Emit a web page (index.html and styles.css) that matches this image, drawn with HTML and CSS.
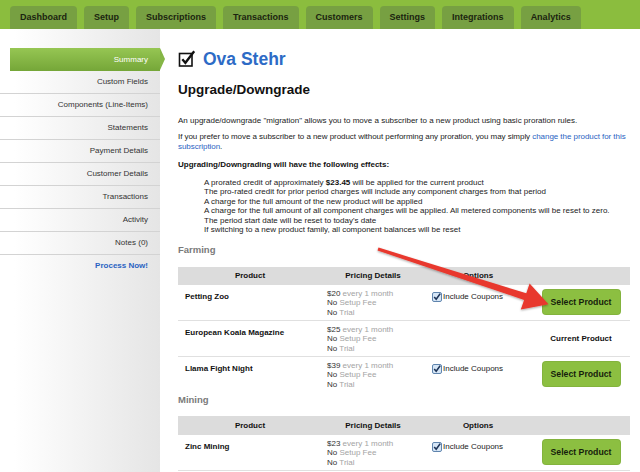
FILE: index.html
```html
<!DOCTYPE html>
<html lang="en">
<head>
<meta charset="utf-8">
<title>Upgrade/Downgrade</title>
<link rel="stylesheet" href="styles.css">
</head>
<body>
<nav class="topnav">
  <a class="tab">Dashboard</a>
  <a class="tab">Setup</a>
  <a class="tab">Subscriptions</a>
  <a class="tab">Transactions</a>
  <a class="tab">Customers</a>
  <a class="tab">Settings</a>
  <a class="tab">Integrations</a>
  <a class="tab">Analytics</a>
</nav>
<div class="main">
  <aside class="sidebar">
    <ul class="side-menu">
      <li class="active">Summary</li>
      <li>Custom Fields</li>
      <li>Components (Line-Items)</li>
      <li>Statements</li>
      <li>Payment Details</li>
      <li>Customer Details</li>
      <li>Transactions</li>
      <li>Activity</li>
      <li>Notes (0)</li>
      <li class="process">Process Now!</li>
    </ul>
  </aside>
  <section class="content">
    <h1 class="title">
      <svg class="title-icon" width="18" height="18" viewBox="0 0 18 18">
        <rect x="1.5" y="3.5" width="12.5" height="12.5" fill="none" stroke="#111" stroke-width="1.6"/>
        <path d="M4.3 9.2 L7.4 12.8 L16.2 1.2" fill="none" stroke="#111" stroke-width="2.3" stroke-linejoin="miter"/>
      </svg>
      <span>Ova Stehr</span>
    </h1>
    <h2 class="page-heading">Upgrade/Downgrade</h2>
    <p class="p1">An upgrade/downgrade "migration" allows you to move a subscriber to a new product using basic proration rules.</p>
    <p class="p2">If you prefer to move a subscriber to a new product without performing any proration, you may simply <a class="link">change the product for this subscription</a>.</p>
    <p class="effects-title">Upgrading/Downgrading will have the following effects:</p>
    <ul class="effects">
      <li>A prorated credit of approximately <b>$23.45</b> will be applied for the current product</li>
      <li>The pro-rated credit for prior period charges will include any component charges from that period</li>
      <li>A charge for the full amount of the new product will be applied</li>
      <li>A charge for the full amount of all component charges will be applied. All metered components will be reset to zero.</li>
      <li>The period start date will be reset to today's date</li>
      <li>If switching to a new product family, all component balances will be reset</li>
    </ul>

    <h3 class="family family-first">Farming</h3>
    <table class="products">
      <colgroup><col class="c1"><col class="c2"><col class="c3"><col class="c4"></colgroup>
      <thead>
        <tr><th>Product</th><th>Pricing Details</th><th>Options</th><th></th></tr>
      </thead>
      <tbody>
        <tr>
          <td class="name">Petting Zoo</td>
          <td class="pricing">
            <div><span class="val">$20</span> <span class="muted">every 1 month</span></div>
            <div><span class="val">No</span> <span class="muted">Setup Fee</span></div>
            <div><span class="val">No</span> <span class="muted">Trial</span></div>
          </td>
          <td class="options"><label class="coupon"><svg class="cb" width="10" height="10" viewBox="0 0 10 10"><rect x="0.5" y="0.5" width="9" height="9" rx="1.5" fill="#d6e6f6" stroke="#5f84ad"/><path d="M2.2 5 L4.2 7.3 L8.2 1.6" fill="none" stroke="#1d3357" stroke-width="1.6"/></svg>Include Coupons</label></td>
          <td class="action"><a class="btn">Select Product</a></td>
        </tr>
        <tr>
          <td class="name">European Koala Magazine</td>
          <td class="pricing">
            <div><span class="val">$25</span> <span class="muted">every 1 month</span></div>
            <div><span class="val">No</span> <span class="muted">Setup Fee</span></div>
            <div><span class="val">No</span> <span class="muted">Trial</span></div>
          </td>
          <td class="options"></td>
          <td class="action"><span class="current">Current Product</span></td>
        </tr>
        <tr class="last">
          <td class="name">Llama Fight Night</td>
          <td class="pricing">
            <div><span class="val">$39</span> <span class="muted">every 1 month</span></div>
            <div><span class="val">No</span> <span class="muted">Setup Fee</span></div>
            <div><span class="val">No</span> <span class="muted">Trial</span></div>
          </td>
          <td class="options"><label class="coupon"><svg class="cb" width="10" height="10" viewBox="0 0 10 10"><rect x="0.5" y="0.5" width="9" height="9" rx="1.5" fill="#d6e6f6" stroke="#5f84ad"/><path d="M2.2 5 L4.2 7.3 L8.2 1.6" fill="none" stroke="#1d3357" stroke-width="1.6"/></svg>Include Coupons</label></td>
          <td class="action"><a class="btn">Select Product</a></td>
        </tr>
      </tbody>
    </table>

    <h3 class="family family-next">Mining</h3>
    <table class="products products-next">
      <colgroup><col class="c1"><col class="c2"><col class="c3"><col class="c4"></colgroup>
      <thead>
        <tr><th>Product</th><th>Pricing Details</th><th>Options</th><th></th></tr>
      </thead>
      <tbody>
        <tr>
          <td class="name">Zinc Mining</td>
          <td class="pricing">
            <div><span class="val">$23</span> <span class="muted">every 1 month</span></div>
            <div><span class="val">No</span> <span class="muted">Setup Fee</span></div>
            <div><span class="val">No</span> <span class="muted">Trial</span></div>
          </td>
          <td class="options"><label class="coupon"><svg class="cb" width="10" height="10" viewBox="0 0 10 10"><rect x="0.5" y="0.5" width="9" height="9" rx="1.5" fill="#d6e6f6" stroke="#5f84ad"/><path d="M2.2 5 L4.2 7.3 L8.2 1.6" fill="none" stroke="#1d3357" stroke-width="1.6"/></svg>Include Coupons</label></td>
          <td class="action"><a class="btn">Select Product</a></td>
        </tr>
      </tbody>
    </table>
  </section>
</div>

<svg class="arrow" width="640" height="472" viewBox="0 0 640 472">
  <defs>
    <filter id="sh" x="-10%" y="-10%" width="120%" height="130%">
      <feDropShadow dx="0" dy="1" stdDeviation="0.8" flood-color="#000" flood-opacity="0.35"/>
    </filter>
  </defs>
  <polygon filter="url(#sh)" fill="#e8382d"
    points="378.5,247.6 526.3,293.3 529.6,283.6 548.5,304.2 520.8,309.6 524.1,299.9 377.5,250.4"/>
</svg>
</body>
</html>
```

FILE: styles.css
```css
body {
  margin: 0;
  font-family: "Liberation Sans", Arial, sans-serif;
  font-size: 8px;
  color: #222;
  background: #fff;
}

.topnav {
  height: 29px;
  box-sizing: border-box;
  background: #8bbd3e;
  display: flex;
  align-items: flex-end;
  gap: 7px;
  padding-left: 10px;
}

.tab {
  height: 23px;
  line-height: 22px;
  padding: 0 10px;
  background: #77a042;
  border-radius: 4px 4px 0 0;
  font-size: 9px;
  font-weight: bold;
  color: #1b2410;
}

.main {
  display: flex;
  align-items: stretch;
}

.sidebar {
  width: 160px;
  flex: none;
  min-height: 443px;
  box-sizing: border-box;
  padding-top: 19px;
  background: linear-gradient(to right, #ffffff 0, #ffffff 14px, #e5e5e5 160px);
}

.side-menu {
  list-style: none;
  margin: 0;
  padding: 0;
}

.side-menu li {
  height: 22px;
  line-height: 22px;
  text-align: right;
  padding-right: 12px;
  border-bottom: 1px solid #d3d3d3;
  color: #333;
  font-size: 8px;
}

.side-menu li.active {
  position: relative;
  margin-left: 10px;
  height: 23px;
  line-height: 23px;
  border-bottom: none;
  color: #fff;
  background: linear-gradient(#96c653, #75a638);
}

.side-menu li.active::after {
  content: "";
  position: absolute;
  right: -5px;
  top: 0;
  border-left: 5px solid #85b646;
  border-top: 11.5px solid transparent;
  border-bottom: 11.5px solid transparent;
}

.side-menu li.process {
  border-bottom: none;
  color: #2a63c2;
  font-weight: bold;
}

.content {
  width: 452px;
  margin-left: 18px;
  padding-top: 20px;
}

.title {
  margin: 0;
  height: 20px;
  display: flex;
  align-items: center;
  gap: 7px;
  font-size: 17.5px;
  line-height: 20px;
  font-weight: bold;
  color: #2d6bc6;
}

.title-icon {
  flex: none;
}

.page-heading {
  margin: 13px 0 0;
  font-size: 13.5px;
  line-height: 16px;
  font-weight: bold;
  color: #111;
}

.p1,
.p2,
.effects-title {
  margin: 0;
  line-height: 10.5px;
  color: #222;
}

.p1 { margin-top: 18px; }

.p2 {
  margin-top: 5px;
  letter-spacing: -0.05px;
}

.link {
  color: #2a63c2;
}

.effects-title {
  margin-top: 7px;
  font-weight: bold;
  color: #111;
}

.effects {
  list-style: none;
  margin: 8px 0 0;
  padding-left: 26px;
  line-height: 9.4px;
  color: #222;
}

.effects b {
  color: #111;
}

.family {
  margin: 0;
  font-size: 9.5px;
  line-height: 12px;
  font-weight: bold;
  color: #7a7a7a;
}

.family-first { margin-top: 9.5px; }
.family-next { margin-top: 2px; }

.products {
  width: 452px;
  table-layout: fixed;
  border-collapse: collapse;
  margin-top: 11px;
}

.products-next { margin-top: 10px; }

.c1 { width: 144px; }
.c2 { width: 102px; }
.c3 { width: 108px; }
.c4 { width: 98px; }

.products th {
  height: 18px;
  padding: 0;
  background: #dcdcdc;
  font-weight: bold;
  font-size: 8px;
  text-align: center;
  color: #111;
}

.products-next th {
  height: 19px;
}

.products td {
  vertical-align: top;
  border-bottom: 1px solid #e0e0e0;
  padding: 0;
  line-height: 9.5px;
}

.products tr.last td {
  border-bottom: none;
}

.products td.name {
  padding: 7px 0 0 7px;
  font-weight: bold;
  color: #111;
}

.products td.pricing {
  padding: 4px 0 2.5px 5px;
}

.val { color: #333; }
.muted { color: #a3a3a3; }

.products td.options {
  padding: 7px 0 0 8px;
}

.coupon {
  display: inline-flex;
  align-items: center;
  gap: 1px;
  color: #222;
}

.cb {
  flex: none;
}

.products td.action {
  vertical-align: middle;
  text-align: center;
}

.btn {
  display: inline-block;
  width: 79px;
  height: 26px;
  line-height: 26px;
  border-radius: 4px;
  background: #8cbf41;
  box-shadow: inset 0 0 0 1px rgba(0, 0, 0, 0.06);
  font-size: 8.7px;
  font-weight: bold;
  color: #161d0c;
  text-align: center;
}

.current {
  font-weight: bold;
  color: #111;
}

.arrow {
  position: absolute;
  left: 0;
  top: 0;
  pointer-events: none;
}
```
